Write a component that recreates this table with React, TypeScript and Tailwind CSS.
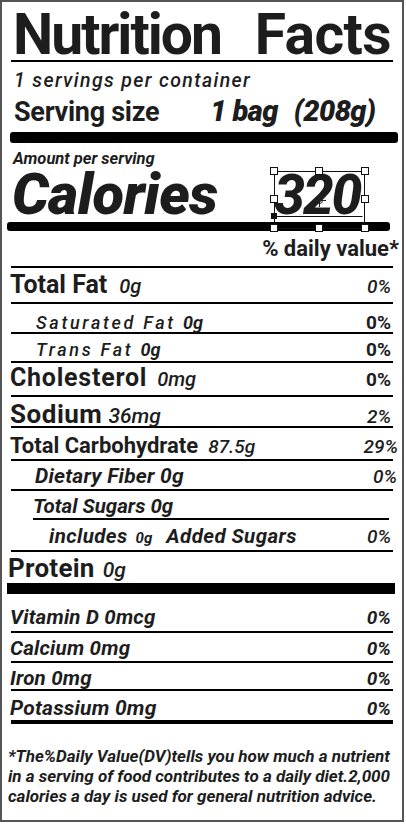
export default function App() {
  return (
    <div className="w-[406px] h-[825px] bg-white font-['Roboto',sans-serif] text-[#1d1d1d]">
      <div className="relative w-[404px] h-[822px] border-2 border-[#555] px-[9px]">
        {/* title */}
        <div className="h-[60px] border-b-2 border-black pt-[4px] px-[2px] flex justify-between text-[57px] font-bold leading-none">
          <span className="tracking-[-0.035em]">Nutrition</span>
          <span className="tracking-[-0.01em]">Facts</span>
        </div>

        {/* servings */}
        <div className="h-[70px] pt-[9px] pl-[3px]">
          <p className="text-[19.5px] leading-none italic font-medium tracking-[0.07em]">1 servings per container</p>
          <div className="mt-[6px] flex items-baseline">
            <span className="text-[27px] leading-none font-bold tracking-[-0.01em]">Serving size</span>
            <span className="ml-[51px] text-[29px] leading-none font-black italic tracking-[-0.02em]">1 bag</span>
            <span className="ml-[16px] text-[29px] leading-none font-black italic tracking-[-0.02em]">(208g)</span>
          </div>
        </div>
        <div className="ml-[-1px] mr-[-5px] h-[11px] rounded-[3px] bg-black" />

        {/* calories */}
        <div className="h-[79px] pt-[8px]">
          <p className="ml-[2px] text-[16.5px] leading-none font-bold italic">Amount per serving</p>
          <div className="mt-[1px] flex items-baseline">
            <span className="ml-[1px] text-[58px] leading-[50px] font-black italic tracking-[-0.01em]">Calories</span>
            <span className="ml-auto mr-[33px] text-[55px] leading-[50px] font-extrabold italic tracking-[-0.04em]">320</span>
          </div>
        </div>
        <div className="ml-[-4px] mr-[3px] h-[9px] rounded-[3px] bg-black" />

        <div className="h-[37px] pt-[7px] border-b-2 border-black flex justify-end">
          <span className="mr-[-6px] text-[22px] leading-none font-bold">% daily value*</span>
        </div>

        <div className="h-[36px] pt-[4px] border-b-2 border-black flex items-baseline justify-between">
          <span className="ml-[-1px] leading-none">
            <span className="text-[25px] font-bold">Total Fat</span>
            <span className="ml-[12px] text-[20px] italic font-medium">0g</span>
          </span>
          <span className="mr-[2px] text-[19px] leading-none italic font-medium">0%</span>
        </div>

        <div className="h-[30px] pt-[9px] pl-[25px] border-b-2 border-black flex items-baseline justify-between">
          <span className="leading-none text-[18px] italic font-medium tracking-[0.15em]">
            Saturated Fat <span className="font-bold tracking-normal">0g</span>
          </span>
          <span className="mr-[2px] text-[19px] leading-none font-bold">0%</span>
        </div>

        <div className="h-[29px] pt-[6px] pl-[25px] border-b-2 border-black flex items-baseline justify-between">
          <span className="leading-none text-[18px] italic font-medium tracking-[0.15em]">
            Trans Fat <span className="font-bold tracking-normal">0g</span>
          </span>
          <span className="mr-[2px] text-[19px] leading-none font-bold">0%</span>
        </div>

        <div className="h-[34px] pt-[2px] border-b-2 border-black flex items-baseline justify-between">
          <span className="ml-[-1px] leading-none">
            <span className="text-[25px] font-bold tracking-[0.03em]">Cholesterol</span>
            <span className="ml-[10px] text-[20px] italic font-medium">0mg</span>
          </span>
          <span className="mr-[2px] text-[19px] leading-none font-bold">0%</span>
        </div>

        <div className="h-[31px] pt-[4px] border-b-2 border-black flex items-baseline justify-between">
          <span className="ml-[-1px] leading-none">
            <span className="text-[26px] font-bold tracking-[0.02em]">Sodium</span>
            <span className="ml-[6px] text-[21px] italic font-medium">36mg</span>
          </span>
          <span className="mr-[2px] text-[19px] leading-none italic font-medium">2%</span>
        </div>

        <div className="h-[33px] pt-[7px] border-b-2 border-black flex items-baseline justify-between">
          <span className="ml-[-1px] leading-none">
            <span className="text-[22px] font-bold">Total Carbohydrate</span>
            <span className="ml-[10px] text-[19px] italic font-medium">87.5g</span>
          </span>
          <span className="mr-[-5px] text-[19px] leading-none italic font-medium">29%</span>
        </div>

        <div className="h-[30px] pt-[5px] pl-[24px] border-b-2 border-black flex items-baseline justify-between">
          <span className="leading-none text-[21px] font-bold italic tracking-[0.01em]">Dietary Fiber 0g</span>
          <span className="mr-[-4px] text-[19px] leading-none italic font-medium">0%</span>
        </div>

        <div className="ml-[22px] mr-[4px] h-[29px] pt-[5px] border-b-2 border-black">
          <span className="leading-none text-[20.5px] font-bold italic">Total Sugars 0g</span>
        </div>

        <div className="h-[32px] pt-[6px] pl-[38px] border-b-2 border-black flex items-baseline justify-between">
          <span className="leading-none font-bold italic">
            <span className="text-[20.5px] tracking-[0.02em]">includes</span>
            <span className="ml-[8px] text-[15px]">0g</span>
            <span className="ml-[14px] text-[20.5px] tracking-[0.02em]">Added Sugars</span>
          </span>
          <span className="mr-[2px] text-[19px] leading-none italic font-medium">0%</span>
        </div>

        <div className="h-[31px] pt-[3px] ml-[-3px]">
          <span className="leading-none">
            <span className="text-[26px] font-bold tracking-[0.01em]">Protein</span>
            <span className="ml-[8px] text-[21px] italic font-medium">0g</span>
          </span>
        </div>
        <div className="ml-[-4px] mr-[-2px] h-[11px] bg-black" />

        <div className="h-[39px] pt-[13px] border-b-2 border-black flex items-baseline justify-between">
          <span className="ml-[-1px] leading-none text-[20.5px] font-bold italic tracking-[0.01em]">Vitamin D 0mcg</span>
          <span className="mr-[2px] text-[19px] leading-none font-bold italic">0%</span>
        </div>

        <div className="h-[30px] pt-[5px] border-b-2 border-black flex items-baseline justify-between">
          <span className="ml-[-1px] leading-none text-[20.5px] font-bold italic tracking-[0.01em]">Calcium 0mg</span>
          <span className="mr-[2px] text-[19px] leading-none font-bold italic">0%</span>
        </div>

        <div className="h-[28px] pt-[5px] border-b-2 border-black flex items-baseline justify-between">
          <span className="ml-[-1px] leading-none text-[20.5px] font-bold italic tracking-[0.01em]">Iron 0mg</span>
          <span className="mr-[2px] text-[19px] leading-none font-bold italic">0%</span>
        </div>

        <div className="h-[33px] pt-[7px] border-b-4 border-black flex items-baseline justify-between">
          <span className="ml-[-1px] leading-none text-[21px] font-bold italic tracking-[0.01em]">Potassium 0mg</span>
          <span className="mr-[2px] text-[19px] leading-none font-bold italic">0%</span>
        </div>

        <p className="pt-[22px] ml-[-3px] mr-[-6px] text-[17px] leading-[20px] font-bold italic whitespace-nowrap">
          *The%Daily Value(DV)tells you how much a nutrient
          <br />
          in a serving of food contributes to a daily diet.2,000
          <br />
          calories a day is used for general nutrition advice.
        </p>

        {/* editor selection handles over the calorie count */}
        <svg className="absolute left-[268px] top-[165px]" width="100" height="66" viewBox="0 0 100 66" fill="none">
          <g stroke="#111" strokeWidth="1">
            <rect x="4.5" y="4.5" width="90" height="57" />
            <line x1="4.5" y1="49.5" x2="92.5" y2="49.5" />
          </g>
          {[
            [4, 4], [49, 4], [95, 4],
            [4, 32], [95, 32],
            [4, 61], [49, 61], [95, 61],
          ].map(([x, y], i) => (
            <rect key={i} x={x - 3.5} y={y - 3.5} width="7" height="7" fill="#fff" stroke="#111" strokeWidth="1" />
          ))}
          <rect x="1" y="46" width="6" height="6" fill="#111" />
          <g stroke="#222" strokeWidth="1">
            <circle cx="49.5" cy="33.5" r="3" />
            <line x1="49.5" y1="27" x2="49.5" y2="40" />
            <line x1="43" y1="33.5" x2="56" y2="33.5" />
          </g>
        </svg>
      </div>
    </div>
  );
}
